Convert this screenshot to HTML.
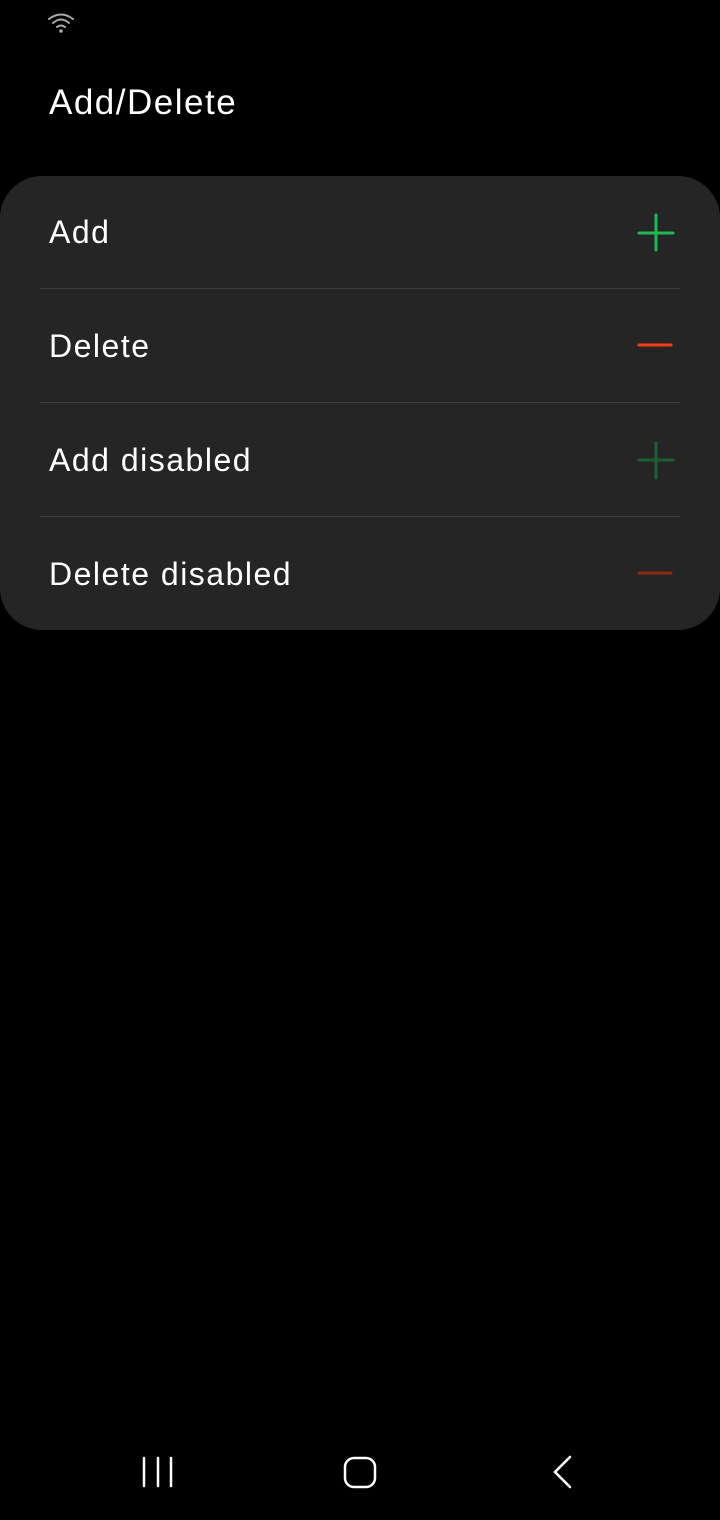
<!DOCTYPE html>
<html><head><style>
body{margin:0;width:720px;height:1520px;background:#000;position:relative;overflow:hidden;font-family:"Liberation Sans",sans-serif;color:#fff}
.t{position:absolute;left:49px;top:83px;font-size:35px;letter-spacing:1.5px}
.card{position:absolute;left:0;top:176px;width:720px;height:454px;background:#252525;border-radius:42px}
.row{position:absolute;left:49px;font-size:32px;letter-spacing:1.5px}
.div{position:absolute;left:40px;width:640px;height:1px;background:#3e3e3e}
svg{position:absolute}
</style></head><body>
<svg style="left:47px;top:12px" width="28" height="22" viewBox="0 0 28 22"><g fill="none" stroke="#aaa" stroke-width="2" stroke-linecap="round"><path d="M2 7 Q14 -2 26 7"/><path d="M6 11 Q14 4 22 11"/><path d="M10 15 Q14 12 18 15"/></g><circle cx="14" cy="19" r="1.8" fill="#aaa"/></svg>
<div class="t">Add/Delete</div>
<div class="card">
<div class="row" style="top:38px">Add</div>
<div class="div" style="top:112px"></div>
<div class="row" style="top:152px">Delete</div>
<div class="div" style="top:226px"></div>
<div class="row" style="top:266px">Add disabled</div>
<div class="div" style="top:340px"></div>
<div class="row" style="top:380px">Delete disabled</div>
</div>
<svg style="left:0;top:0" width="720" height="700"><g stroke-width="3" stroke-linecap="round">
<path d="M639 233H673M656 215V250" stroke="#1db954"/>
<path d="M639 345H671" stroke="#ff3d12"/>
<path d="M639 460H673M656 443V478" stroke="#1e5e35"/>
<path d="M639 573H671" stroke="#8a2a13"/>
</g></svg>
<svg style="left:0;top:1440px" width="720" height="70"><g fill="none" stroke="#fff" stroke-width="2.5" stroke-linecap="round">
<path d="M144 18V46M158 18V46M171 18V46"/>
<rect x="345" y="18" width="30" height="29" rx="9"/>
<path d="M570 17L555 32L570 47"/>
</g></svg>
</body></html>
